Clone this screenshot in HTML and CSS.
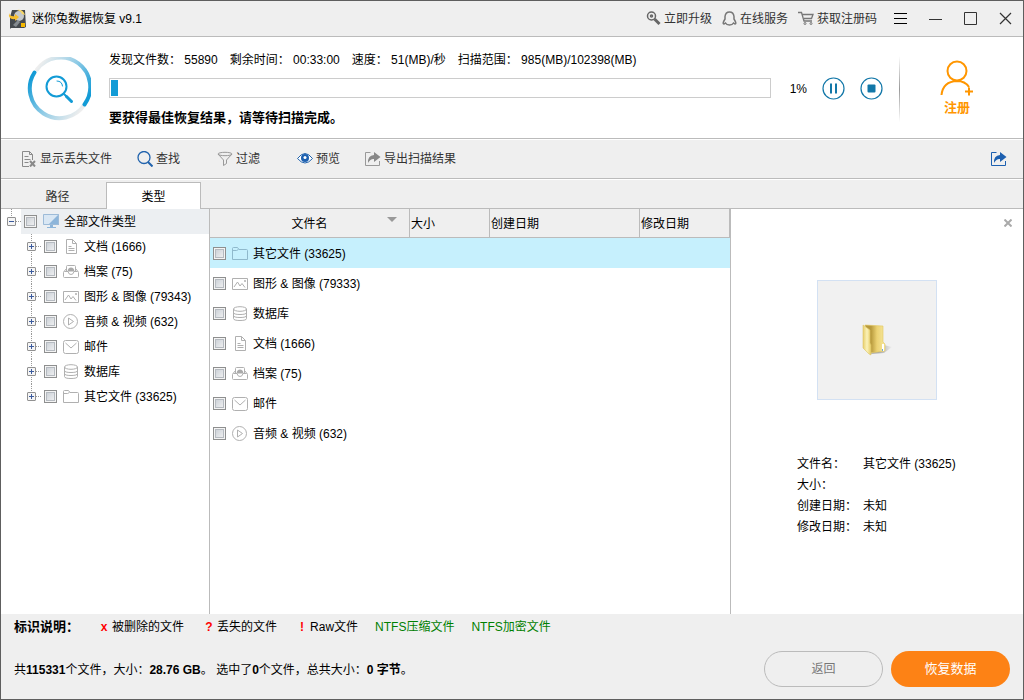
FILE: index.html
```html
<!DOCTYPE html>
<html lang="zh-CN">
<head>
    <meta charset="UTF-8">
    <meta name="viewport" content="width=device-width, initial-scale=1.0">
    <title>迷你兔数据恢复 v9.1</title>
    <link rel="stylesheet" href="styles.css">
</head>
<body>
    <!-- Shared file type icons -->
    <svg class="sprite" aria-hidden="true">
        <symbol id="i-doc" viewBox="0 0 16 16"><path d="M3.500.5h6l4 4v10h-10zM9.500.5v4h4M5.500 7.500h3M5.500 9.500h6M5.500 11.500h6"/></symbol>
        <symbol id="i-archive" viewBox="0 0 16 16"><path d="M1 7.500l2.500-3M15 7.500l-2.500-3M3.500 7V2.500Q3.500 1.500 4.500 1.500h7q1 0 1 1V7M1.500 7.500H5q.5 3 3 3t3-3h3.500q1 0 1 1v4q0 1-1 1h-13q-1 0-1-1v-4q0-1 1-1z"/><path class="solid" d="M4.500 7.500Q5 3.500 8 3.500T11.500 7.500z"/></symbol>
        <symbol id="i-image" viewBox="0 0 16 16"><path d="M.5 2.500h15v11H.5zM2 11l3.500-5 2.500 4 2-2.500 3 4M13 4v2M12 5h2"/></symbol>
        <symbol id="i-media" viewBox="0 0 16 16"><circle cx="7.500" cy="7.500" r="7"/><path d="M5.500 4v7l5-3.500z"/></symbol>
        <symbol id="i-mail" viewBox="0 0 16 16"><rect x=".5" y="1.500" width="15" height="13" rx="2"/><path d="M2.500 4L8 9l5.500-5"/></symbol>
        <symbol id="i-db" viewBox="0 0 16 16"><ellipse cx="8" cy="3" rx="6.500" ry="2.300"/><path d="M1.500 3v9.500q0 2 6.500 2t6.500-2V3M1.500 6.500q0 2 6.500 2t6.500-2M1.500 9.500q0 2 6.500 2t6.500-2"/></symbol>
        <symbol id="i-folder" viewBox="0 0 16 16"><path d="M.5 13.500V2.500q0-1 1-1h4l1.500 2h7.500q1 0 1 1v9zM.5 4.500h4l2-1"/></symbol>
        <symbol id="i-share" viewBox="0 0 16 16"><path d="M5.500 1.500h-5v13h14V10"/><path class="solid" d="M9 1l6.500 5L9 11V8Q5.500 7.500 3 12 2.500 4.500 9 4z"/></symbol>
    </svg>

    <div class="window">
        <header class="titlebar">
            <svg class="app-icon" width="19" height="20" viewBox="0 0 19 20">
                <path d="M4 1h13l1 17-2 1H3l-1 1V8z" fill="#454a4f"/>
                <circle cx="11" cy="7" r="5" fill="#c5c9cc"/>
                <path d="M5 16l5-5 2 2-4 5z" fill="#858b90"/>
                <path d="M1 4q1 4 6 3V5l4 3-4 4v-2Q0 11 1 4z" fill="#f5bd2c"/>
                <path d="M9 1q6-1 8 5l-3-1q-1-3-5-4z" fill="#f9d867"/>
                <rect x="13" y="14" width="4" height="4" fill="#f5b800"/>
            </svg>
            <h1>迷你兔数据恢复 v9.1</h1>
            <nav class="title-links">
                <a href="#">
                    <svg width="15" height="15" viewBox="0 0 15 15" fill="none" stroke="#666"><circle cx="5.500" cy="5" r="4" stroke-width="1.500"/><circle cx="5.500" cy="5" r="1" stroke-width="1.500"/><path d="M8.500 8l5 5" stroke-width="3"/></svg>
                    立即升级
                </a>
                <a href="#">
                    <svg width="15" height="15" viewBox="0 0 15 15" fill="none" stroke="#777" stroke-width="1.500"><path d="M3 8V5.500Q3.500 1 7.500 1T12 5.500V8q3 5 1 5l-1.500-1q-1 2-4 2t-4-2L2 13q-2 0 1-5z"/></svg>
                    在线服务
                </a>
                <a href="#">
                    <svg width="16" height="15" viewBox="0 0 16 15" fill="none" stroke="#777"><path d="M0 1.500h3.500L6 10h8M4 3.500h11l-1.500 4H6" stroke-width="1.300"/><circle cx="7" cy="12.500" r="1"/><circle cx="13" cy="12.500" r="1"/></svg>
                    获取注册码
                </a>
            </nav>
            <div class="window-controls">
                <button type="button" aria-label="菜单"><svg width="13" height="13" viewBox="0 0 13 13"><path d="M0 1.500h13M0 6.500h13M0 11.500h13" stroke="#000"/></svg></button>
                <button type="button" aria-label="最小化"><svg width="13" height="13" viewBox="0 0 13 13"><path d="M0 7.500h13" stroke="#333"/></svg></button>
                <button type="button" aria-label="最大化"><svg width="13" height="13" viewBox="0 0 13 13"><path d="M.5.5h12v12H.5z" fill="none" stroke="#333"/></svg></button>
                <button type="button" aria-label="关闭"><svg width="13" height="13" viewBox="0 0 13 13"><path d="M1 1l11 11M12 1L1 12" stroke="#333" stroke-width="1.200"/></svg></button>
            </div>
        </header>

        <section class="scan">
            <svg class="scan-icon" width="64" height="64" viewBox="0 0 64 64" fill="none">
                <defs>
                    <linearGradient id="ringTop" gradientUnits="userSpaceOnUse" x1="12" y1="8" x2="60" y2="42">
                        <stop offset="0" stop-color="#eee"/><stop offset=".5" stop-color="#8fcbe6"/><stop offset="1" stop-color="#129bd6"/>
                    </linearGradient>
                    <linearGradient id="ringBottom" gradientUnits="userSpaceOnUse" x1="53" y1="55" x2="4" y2="20">
                        <stop offset="0" stop-color="#eee"/><stop offset=".5" stop-color="#8fcbe6"/><stop offset="1" stop-color="#129bd6"/>
                    </linearGradient>
                </defs>
                <path d="M57.500 47.500A29.500 29.500 0 0 1 7.500 15.500" stroke="url(#ringBottom)" stroke-width="4" stroke-linecap="round"/>
                <path d="M10 12.500A29.500 29.500 0 0 1 57.500 47.500" stroke="url(#ringTop)" stroke-width="4" stroke-linecap="round"/>
                <g stroke="#129bd6" stroke-linecap="round">
                    <circle cx="29.500" cy="29.500" r="10" stroke-width="2"/>
                    <path d="M37 37l3 3" stroke-width="2"/>
                    <path d="M39.500 39.500l5 5" stroke-width="3"/>
                    <path d="M30 24q5 0 5.500 5"/>
                </g>
            </svg>
            <div class="scan-info">
                <p class="stats">
                    <span>发现文件数： 55890</span>
                    <span>剩余时间： 00:33:00</span>
                    <span>速度： 51(MB)/秒</span>
                    <span>扫描范围： 985(MB)/102398(MB)</span>
                </p>
                <div class="progress" role="progressbar" aria-label="扫描进度" aria-valuenow="1" aria-valuemin="0" aria-valuemax="100">
                    <div class="progress-fill" style="width: 1%"></div>
                </div>
                <p class="notice">要获得最佳恢复结果，请等待扫描完成。</p>
            </div>
            <div class="scan-controls">
                <span>1%</span>
                <button type="button" aria-label="暂停"><svg width="23" height="23" viewBox="0 0 23 23"><circle cx="11.500" cy="11.500" r="10.500" fill="none" stroke="#1277a8" stroke-width="1.200"/><path d="M9 6.500v10M14 6.500v10" stroke="#1277a8" stroke-width="2"/></svg></button>
                <button type="button" aria-label="停止"><svg width="23" height="23" viewBox="0 0 23 23"><circle cx="11.500" cy="11.500" r="10.500" fill="none" stroke="#1277a8" stroke-width="1.200"/><rect x="7.500" y="7.500" width="8" height="8" rx="1" fill="#1277a8"/></svg></button>
            </div>
            <button type="button" class="register">
                <svg width="34" height="36" viewBox="0 0 34 36" fill="none" stroke="#ff9600" stroke-width="2"><circle cx="17" cy="11" r="9.500"/><path d="M1.500 35Q3 21.500 17 21q8 0 12 6M29 27.500v8M25 31.500h8"/></svg>
                注册
            </button>
        </section>

        <div class="toolbar">
            <button type="button">
                <svg width="16" height="16" viewBox="0 0 16 16" fill="none" stroke="#8a8a8a"><path d="M8 15.500H1.500V.5h7l3 3V9M8.500.5v3h3M3.500 5.500h4M3.500 8.500h6M3.500 11.500h4"/><path d="M9 10l5 5.500M14 10l-5 5.500" stroke-width="2"/></svg>
                显示丢失文件
            </button>
            <button type="button" class="short">
                <svg width="16" height="16" viewBox="0 0 16 16" fill="none" stroke="#2163ad"><circle cx="7" cy="6.500" r="6" stroke-width="1.300"/><path d="M11 11l4.500 4.500" stroke-width="2"/></svg>
                查找
            </button>
            <button type="button" class="short">
                <svg width="16" height="16" viewBox="0 0 16 16" fill="none" stroke="#999"><path d="M1 3l5.500 6v5.500l3-2V9L15 3"/><ellipse cx="8" cy="3" rx="7" ry="1.700"/></svg>
                过滤
            </button>
            <button type="button">
                <svg width="16" height="16" viewBox="0 0 16 16"><path d="M.5 7.500Q8-2.500 15.500 7.500 8 16.500 .5 7.500z" fill="#fff" stroke="#2163ad"/><circle cx="8" cy="7" r="4" fill="#1d60b0"/><circle cx="8" cy="6.500" r="1.500" fill="#fff"/></svg>
                预览
            </button>
            <button type="button">
                <svg class="icon" width="16" height="16"><use href="#i-share"/></svg>
                导出扫描结果
            </button>
            <button type="button" class="share" aria-label="分享"><svg class="icon" width="16" height="16"><use href="#i-share"/></svg></button>
        </div>

        <div class="tabs" role="tablist">
            <button type="button" class="tab" role="tab" aria-selected="false">路径</button>
            <button type="button" class="tab active" role="tab" aria-selected="true">类型</button>
        </div>

        <main class="content">
            <aside class="tree">
                <div class="tree-root">
                    <button type="button" class="expander open" aria-label="折叠"></button>
                    <span class="dots"></span>
                    <label class="root-label">
                        <input type="checkbox">
                        <svg width="16" height="16" viewBox="0 0 16 16"><path d="M0 0h16v11H0z" fill="#d9e7f4"/><path d="M16 0v11H5z" fill="#8db5da"/><path d="M.5.5h15v10H.5z" fill="none" stroke="#9dbbd8"/><path d="M7 11h3v2h3v1H4v-1h3z" fill="#8db5da"/></svg>
                        全部文件类型
                    </label>
                </div>
                <ul>
                    <li>
                        <button type="button" class="expander" aria-label="展开"></button><span class="dots"></span>
                        <label><input type="checkbox"><svg class="icon"><use href="#i-doc"/></svg>文档 (1666)</label>
                    </li>
                    <li>
                        <button type="button" class="expander" aria-label="展开"></button><span class="dots"></span>
                        <label><input type="checkbox"><svg class="icon"><use href="#i-archive"/></svg>档案 (75)</label>
                    </li>
                    <li>
                        <button type="button" class="expander" aria-label="展开"></button><span class="dots"></span>
                        <label><input type="checkbox"><svg class="icon"><use href="#i-image"/></svg>图形 &amp; 图像 (79343)</label>
                    </li>
                    <li>
                        <button type="button" class="expander" aria-label="展开"></button><span class="dots"></span>
                        <label><input type="checkbox"><svg class="icon"><use href="#i-media"/></svg>音频 &amp; 视频 (632)</label>
                    </li>
                    <li>
                        <button type="button" class="expander" aria-label="展开"></button><span class="dots"></span>
                        <label><input type="checkbox"><svg class="icon"><use href="#i-mail"/></svg>邮件</label>
                    </li>
                    <li>
                        <button type="button" class="expander" aria-label="展开"></button><span class="dots"></span>
                        <label><input type="checkbox"><svg class="icon"><use href="#i-db"/></svg>数据库</label>
                    </li>
                    <li>
                        <button type="button" class="expander" aria-label="展开"></button><span class="dots"></span>
                        <label><input type="checkbox"><svg class="icon"><use href="#i-folder"/></svg>其它文件 (33625)</label>
                    </li>
                </ul>
            </aside>

            <section class="files">
                <table>
                    <colgroup>
                        <col class="col-name">
                        <col class="col-size">
                        <col class="col-date">
                        <col>
                    </colgroup>
                    <thead>
                        <tr>
                            <th class="sorted">文件名</th>
                            <th>大小</th>
                            <th>创建日期</th>
                            <th>修改日期</th>
                        </tr>
                    </thead>
                    <tbody>
                        <tr class="selected">
                            <td><label><input type="checkbox"><svg class="icon"><use href="#i-folder"/></svg>其它文件 (33625)</label></td>
                            <td></td><td></td><td></td>
                        </tr>
                        <tr>
                            <td><label><input type="checkbox"><svg class="icon"><use href="#i-image"/></svg>图形 &amp; 图像 (79333)</label></td>
                            <td></td><td></td><td></td>
                        </tr>
                        <tr>
                            <td><label><input type="checkbox"><svg class="icon"><use href="#i-db"/></svg>数据库</label></td>
                            <td></td><td></td><td></td>
                        </tr>
                        <tr>
                            <td><label><input type="checkbox"><svg class="icon"><use href="#i-doc"/></svg>文档 (1666)</label></td>
                            <td></td><td></td><td></td>
                        </tr>
                        <tr>
                            <td><label><input type="checkbox"><svg class="icon"><use href="#i-archive"/></svg>档案 (75)</label></td>
                            <td></td><td></td><td></td>
                        </tr>
                        <tr>
                            <td><label><input type="checkbox"><svg class="icon"><use href="#i-mail"/></svg>邮件</label></td>
                            <td></td><td></td><td></td>
                        </tr>
                        <tr>
                            <td><label><input type="checkbox"><svg class="icon"><use href="#i-media"/></svg>音频 &amp; 视频 (632)</label></td>
                            <td></td><td></td><td></td>
                        </tr>
                    </tbody>
                </table>
            </section>

            <aside class="details">
                <button type="button" class="close-details" aria-label="关闭预览"><svg width="8" height="8" viewBox="0 0 8 8"><path d="M.5.5l7 7M7.500.5l-7 7" stroke="#aaa" stroke-width="2"/></svg></button>
                <div class="thumb">
                    <svg width="32" height="34" viewBox="0 0 32 34">
                        <defs>
                            <linearGradient id="folderBack" x1="0" x2="1"><stop offset=".3" stop-color="#b89a3c"/><stop offset=".6" stop-color="#ecd273"/><stop offset="1" stop-color="#f6e79c"/></linearGradient>
                            <linearGradient id="folderFront" x1="0" x2="1"><stop offset="0" stop-color="#e8cf6c"/><stop offset=".5" stop-color="#fbf2b8"/><stop offset="1" stop-color="#e6cb62"/></linearGradient>
                            <linearGradient id="folderShadow" x1="0" x2="1"><stop offset=".4" stop-color="#aaa"/><stop offset="1" stop-color="#eee"/></linearGradient>
                        </defs>
                        <path d="M9 31l14-9 8 2-8 6z" fill="url(#folderShadow)"/>
                        <path d="M4 2l18 1v16l2 2v7L9 30z" fill="url(#folderBack)" stroke="#e2c75f" stroke-width=".6"/>
                        <path d="M2 2l7 5v13l1 2v10l-2-1-6-6z" fill="url(#folderFront)" stroke="#dcc469" stroke-width=".6"/>
                        <path d="M21 21h2v7h-2z" fill="#fff"/><path d="M21 26h1v2h-1z" fill="#72a8d8"/>
                    </svg>
                </div>
                <dl>
                    <dt>文件名：</dt><dd>其它文件 (33625)</dd>
                    <dt>大小：</dt><dd></dd>
                    <dt>创建日期：</dt><dd>未知</dd>
                    <dt>修改日期：</dt><dd>未知</dd>
                </dl>
            </aside>
        </main>

        <footer class="footer">
            <div class="summary">
                <div class="legend">
                    <strong>标识说明：</strong>
                    <span><b class="mark">x</b>被删除的文件</span>
                    <span><b class="mark">?</b>丢失的文件</span>
                    <span><b class="mark">!</b>Raw文件</span>
                    <span class="ntfs">NTFS压缩文件</span>
                    <span class="ntfs">NTFS加密文件</span>
                </div>
                <p>共<b>115331</b>个文件，大小：<b>28.76 GB</b>。 选中了<b>0</b>个文件，总共大小：<b>0 字节</b>。</p>
            </div>
            <div class="actions">
                <button type="button" class="back">返回</button>
                <button type="button" class="recover">恢复数据</button>
            </div>
        </footer>
    </div>
</body>
</html>
```
FILE: styles.css
```css
* {
    box-sizing: border-box;
}
body {
    margin: 0;
    font-family: "Liberation Sans", "Noto Sans CJK SC", sans-serif;
    font-size: 12px;
    line-height: 20px;
    color: #000;
}
h1, p, ul, dl, dd {
    margin: 0;
    padding: 0;
}
ul {
    list-style: none;
}
button {
    margin: 0;
    padding: 0;
    border: none;
    background: none;
    font: inherit;
    color: inherit;
    cursor: pointer;
}
a {
    color: inherit;
    text-decoration: none;
}
svg {
    display: block;
    flex-shrink: 0;
}
.sprite {
    position: absolute;
    width: 0;
    height: 0;
}
.icon {
    width: 16px;
    height: 16px;
    fill: none;
    stroke: #b0b0b0;
}
.solid {
    fill: var(--arrow, #aaa);
    stroke: none;
}

.window {
    display: flex;
    flex-direction: column;
    min-height: 100vh;
    background: #efefef;
    border: 1px solid #5e5e5e;
}

/* Title bar */
.titlebar {
    display: flex;
    align-items: center;
    height: 36px;
    padding: 0 11px 0 7px;
    border-bottom: 1px solid #bbb;
}
h1 {
    margin-left: 5px;
    font-size: 12px;
    font-weight: normal;
}
.title-links {
    display: flex;
    gap: 10px;
    margin-left: auto;
    color: #333;
}
.title-links a {
    display: flex;
    align-items: center;
    gap: 3px;
}
.window-controls {
    display: flex;
    gap: 22px;
    margin-left: 17px;
}

/* Scan status */
.scan {
    display: flex;
    align-items: center;
    height: 102px;
    padding: 2px 0 0 26px;
    background: #fff;
    border-bottom: 1px solid #bbb;
}
.scan-info {
    flex: 1;
    margin-left: 18px;
}
.stats {
    display: flex;
    gap: 12px;
    white-space: nowrap;
}
.progress {
    height: 20px;
    margin: 8px 0 10px;
    padding: 1px;
    border: 1px solid #ccc;
}
.progress-fill {
    height: 16px;
    background: #129bd6;
}
.notice {
    font-size: 13px;
    font-weight: bold;
}
.scan-controls {
    display: flex;
    align-items: center;
    gap: 15px;
    margin-left: 19px;
}
.register {
    display: flex;
    flex-direction: column;
    align-items: center;
    gap: 2px;
    width: 124px;
    height: 66px;
    margin-left: 16px;
    padding: 4px 8px 0 0;
    background: linear-gradient(#fff, #999, #fff) no-repeat left / 1px 100%;
    color: #ff9600;
    font-size: 13px;
    font-weight: bold;
}

/* Toolbar */
.toolbar {
    display: flex;
    align-items: center;
    gap: 25px;
    height: 40px;
    padding: 0 16px 0 20px;
    border-top: 1px solid #fff;
    border-bottom: 1px solid #bbb;
    color: #333;
}
.toolbar button {
    display: flex;
    align-items: center;
    gap: 3px;
}
.toolbar .short {
    min-width: 55px;
}
.toolbar .icon {
    stroke: #999;
    --arrow: #888;
}
.toolbar .share {
    margin-left: auto;
}
.toolbar .share .icon {
    stroke: #1d60b0;
    --arrow: #1d60b0;
}

/* Tabs */
.tabs {
    display: flex;
    align-items: flex-end;
    height: 30px;
    padding-left: 8px;
    border-top: 1px solid #fff;
    border-bottom: 1px solid #bbb;
}
.tab {
    width: 97px;
    height: 25px;
    padding-top: 2px;
    color: #333;
}
.tab.active {
    width: 95px;
    height: 27px;
    margin-bottom: -1px;
    background: #fff;
    border: 1px solid #bbb;
    border-bottom: none;
    color: #000;
}

/* Panes */
.content {
    display: grid;
    grid-template-columns: 208px minmax(0, 1fr) 292px;
    flex: 1;
    background: #fff;
}
input[type="checkbox"] {
    flex-shrink: 0;
    appearance: none;
    width: 13px;
    height: 13px;
    margin: 0;
    border: 1px solid #8e8f8f;
    background: linear-gradient(135deg, #c5cbd2, #f6f6f6);
    box-shadow: inset 0 0 0 1px #f4f4f4, inset 0 0 0 2px #b5bac0;
}
input[type="checkbox"]:checked {
    background: #3c6fb0;
}
label {
    display: flex;
    align-items: center;
    white-space: nowrap;
}
label svg {
    margin: 0 5px 0 6px;
}
.tree-root {
    display: flex;
    align-items: center;
    height: 25px;
    padding-left: 6px;
    background: repeating-linear-gradient(#999 0 1px, #fff 1px 2px) no-repeat 10px 0 / 1px 50%;
}
.root-label {
    flex: 1;
    height: 25px;
    padding-left: 3px;
    background: #eceff2;
}
.tree li {
    display: flex;
    align-items: center;
    height: 25px;
    padding-left: 26px;
    background: repeating-linear-gradient(#999 0 1px, #fff 1px 2px) no-repeat 30px 0 / 1px 100%;
}
.tree li:last-child {
    background-size: 1px 50%;
}
.tree li label {
    padding-left: 3px;
}
.expander {
    width: 9px;
    height: 9px;
    border: 1px solid #919191;
    border-radius: 1px;
    background: linear-gradient(#3b5a9c, #3b5a9c) no-repeat center / 5px 1px,
        linear-gradient(#3b5a9c, #3b5a9c) no-repeat center / 1px 5px,
        #f5f5f5;
}
.expander.open {
    background: linear-gradient(#3b5a9c, #3b5a9c) no-repeat center / 5px 1px, #f5f5f5;
}
.dots {
    width: 5px;
    border-top: 1px dotted #999;
}

/* File list */
.files {
    border: 1px solid #bbb;
    border-width: 0 1px;
}
table {
    width: 100%;
    table-layout: fixed;
    border-collapse: separate;
    border-spacing: 0;
}
.col-name {
    width: 200px;
}
.col-size {
    width: 80px;
}
.col-date {
    width: 150px;
}
th {
    height: 29px;
    padding: 1px 1px 0;
    background: #efefef;
    border: 1px solid #bbb;
    border-width: 0 1px 1px 0;
    font-weight: normal;
    text-align: left;
}
.sorted {
    position: relative;
    text-align: center;
}
.sorted::after {
    content: "";
    position: absolute;
    top: 8px;
    right: 12px;
    border: 5px solid transparent;
    border-top-color: #999;
    border-bottom: none;
}
td {
    height: 30px;
    padding: 1px 3px 0;
}
.selected {
    background: #c6f0fd;
}
.selected .icon {
    stroke: #8fb9cc;
}

/* Details */
.details {
    padding: 0 11px;
}
.close-details {
    display: flex;
    align-items: center;
    height: 28px;
    margin-left: auto;
}
.thumb {
    display: grid;
    place-items: center;
    width: 120px;
    height: 120px;
    margin: 43px auto 54px;
    background: #f1f1f1;
    border: 1px solid #d3e1f3;
}
dl {
    display: grid;
    grid-template-columns: 66px auto;
    grid-auto-rows: 21px;
    padding-left: 55px;
}

/* Footer */
.footer {
    display: flex;
    justify-content: space-between;
    height: 85px;
    padding: 0 13px;
}
.legend {
    display: flex;
    align-items: center;
    gap: 17px;
    height: 26px;
    margin-bottom: 20px;
}
.legend span {
    display: flex;
}
.legend strong {
    font-size: 13px;
}
.mark {
    width: 16px;
    color: #f00;
    text-align: center;
}
.ntfs {
    color: #008000;
}
.actions {
    display: flex;
    gap: 8px;
    align-self: flex-end;
    margin-bottom: 12px;
}
.actions button {
    width: 119px;
    height: 36px;
    border-radius: 18px;
}
.actions .back {
    border: 1px solid #bbb;
    color: #777;
}
.actions .recover {
    background: #fd8215;
    color: #fff;
    font-size: 13px;
}
```
